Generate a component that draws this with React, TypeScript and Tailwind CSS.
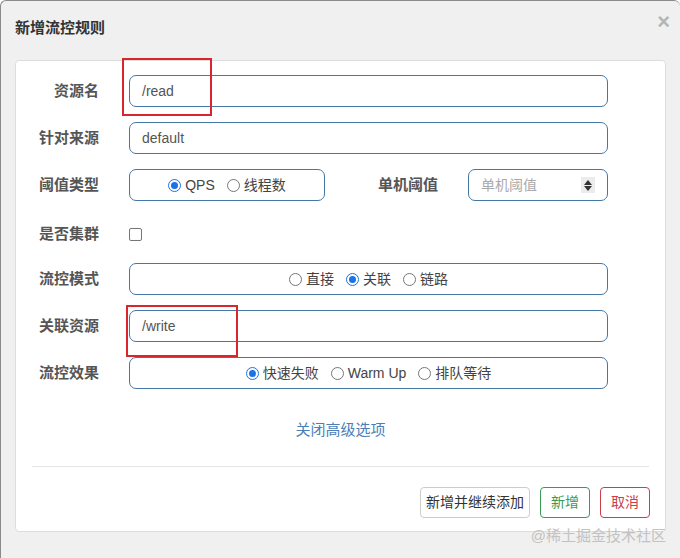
import type { ReactNode } from "react";

const FONT = { fontFamily: '"Liberation Sans", "Noto Sans CJK SC", sans-serif' };

function Radio({ checked, label }: { checked?: boolean; label: string }) {
  return (
    <span className="flex items-center gap-[4px]">
      {checked ? (
        <span className="flex h-[13px] w-[13px] items-center justify-center rounded-full border-[1.5px] border-[#1a73e8] bg-white">
          <span className="h-[7px] w-[7px] rounded-full bg-[#1a73e8]" />
        </span>
      ) : (
        <span className="h-[13px] w-[13px] rounded-full border border-[#767676] bg-white" />
      )}
      <span className="text-[14px] text-[#444]">{label}</span>
    </span>
  );
}

function Row({ label, children, className = "" }: { label: string; children: ReactNode; className?: string }) {
  return (
    <div className={`flex items-center ${className}`}>
      <label className="w-[83px] shrink-0 text-right text-[15px] font-bold text-[#555]">{label}</label>
      <div className="ml-[30px] flex flex-1 items-center">{children}</div>
    </div>
  );
}

const box = "h-[32px] rounded-[7px] border border-[#4577a6] bg-white";

export default function App() {
  return (
    <div style={FONT} className="relative h-[558px] w-[680px] overflow-hidden rounded-t-[6px] border-l border-t border-[#8a8a8a] bg-[#f0f0f0]">
      <div className="h-[59px] pl-[14px] pt-[17px]">
        <h4 className="text-[15px] font-bold leading-[20px] text-[#333]">新增流控规则</h4>
      </div>
      <span className="absolute right-[10px] top-[4px] text-[22px] font-bold text-[#b5b5b5]">×</span>

      <div className="ml-[14px] flex h-[472px] w-[651px] flex-col rounded-[4px] border border-[#dddddd] bg-white">
        <div className="flex flex-col gap-[15px] pr-[57px] pt-[14px]">
          <Row label="资源名">
            <div className="relative flex-1">
              <div className={`${box} flex items-center px-[12px] text-[14px] text-[#555]`}>/read</div>
              <div className="absolute left-[-7px] top-[-17px] h-[58px] w-[90px] border-2 border-[#d9262c]" />
            </div>
          </Row>
          <Row label="针对来源">
            <div className={`${box} flex flex-1 items-center px-[12px] text-[14px] text-[#555]`}>default</div>
          </Row>
          <Row label="阈值类型">
            <div className={`${box} flex w-[196px] items-center justify-center gap-[12px]`}>
              <Radio checked label="QPS" />
              <Radio label="线程数" />
            </div>
            <label className="ml-[51px] w-[62px] text-right text-[15px] font-bold text-[#555]">单机阈值</label>
            <div className={`${box} ml-[30px] flex flex-1 items-center justify-between pl-[12px] pr-[12px]`}>
              <span className="text-[14px] text-[#aaa]">单机阈值</span>
              <span className="flex h-[16px] w-[14px] flex-col items-center justify-center gap-[1px] bg-[#ececec]">
                <svg width="8" height="5" viewBox="0 0 8 5"><path d="M0 5 L4 0 L8 5 Z" fill="#333" /></svg>
                <svg width="8" height="5" viewBox="0 0 8 5"><path d="M0 0 L4 5 L8 0 Z" fill="#333" /></svg>
              </span>
            </div>
          </Row>
          <Row label="是否集群" className="h-[32px] pt-[4px]">
            <span className="h-[13px] w-[13px] rounded-[2px] border border-[#767676] bg-white" />
          </Row>
          <Row label="流控模式">
            <div className={`${box} flex flex-1 items-center justify-center gap-[12px]`}>
              <Radio label="直接" />
              <Radio checked label="关联" />
              <Radio label="链路" />
            </div>
          </Row>
          <Row label="关联资源">
            <div className="relative flex-1">
              <div className={`${box} flex items-center px-[12px] text-[14px] text-[#555]`}>/write</div>
              <div className="absolute left-[-3px] top-[-5px] h-[52px] w-[112px] border-2 border-[#d9262c]" />
            </div>
          </Row>
          <Row label="流控效果">
            <div className={`${box} flex flex-1 items-center justify-center gap-[12px]`}>
              <Radio checked label="快速失败" />
              <Radio label="Warm Up" />
              <Radio label="排队等待" />
            </div>
          </Row>
        </div>

        <div className="mt-[30px] flex justify-center">
          <a className="text-[15px] text-[#4a7fb8]">关闭高级选项</a>
        </div>

        <div className="mx-[16px] mt-[24px] border-t border-[#e5e5e5]" />

        <div className="mr-[15px] mt-[20px] flex justify-end gap-[10px]">
          <button className="h-[31px] w-[110px] rounded-[4px] border border-[#cccccc] bg-white text-[14px] text-[#333]">新增并继续添加</button>
          <button className="h-[31px] w-[50px] rounded-[4px] border border-[#3a9a55] bg-white text-[14px] text-[#3a9a55]">新增</button>
          <button className="h-[31px] w-[50px] rounded-[4px] border border-[#c9404a] bg-white text-[14px] text-[#c9404a]">取消</button>
        </div>
      </div>

      <span className="absolute right-[14px] top-[524px] text-[15px] text-[#c2c2c2]">@稀土掘金技术社区</span>
    </div>
  );
}
